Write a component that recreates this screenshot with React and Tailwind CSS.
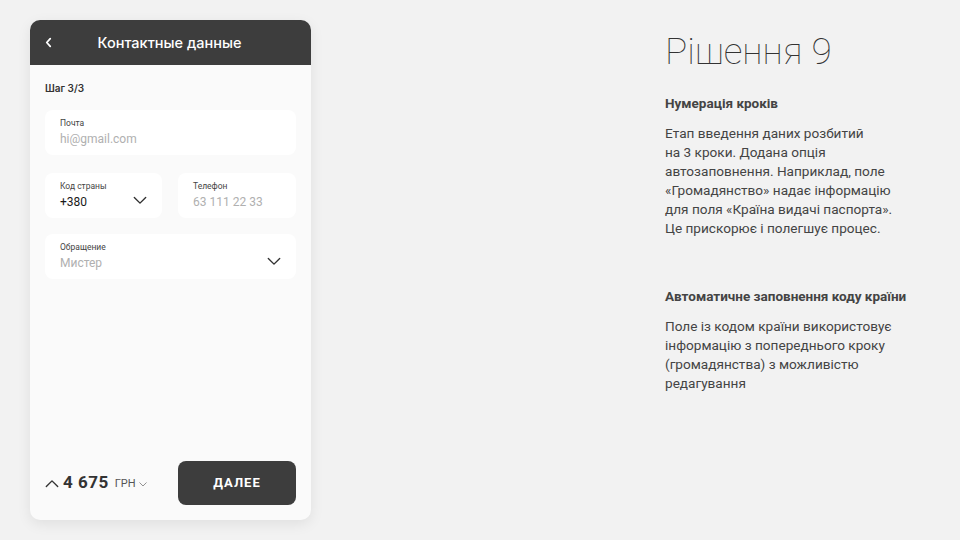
import React from 'react';

function Chevron({ className = '', up = false }) {
  return (
    <svg viewBox="0 0 16 10" className={className} fill="none" stroke="currentColor" strokeWidth="1.6" strokeLinecap="round" strokeLinejoin="round">
      {up ? <path d="M1.5 8.5 L8 2 L14.5 8.5" /> : <path d="M1.5 1.5 L8 8 L14.5 1.5" />}
    </svg>
  );
}

function Field({ label, value, muted = true, arrow = false, className = '' }) {
  return (
    <div className={`bg-white rounded-lg pl-[15px] pr-[15px] h-[45px] flex items-center ${className}`}>
      <div className="flex-1 flex flex-col justify-center">
        <div className="text-[8.5px] leading-[11px] text-[#444]">{label}</div>
        <div className={`text-[12px] leading-[16px] mt-[2px] ${muted ? 'text-[#b0b0b0]' : 'text-[#1a1a1a]'}`}>{value}</div>
      </div>
      {arrow && <Chevron className="w-[14px] h-[9px] text-[#333] mt-[10px]" />}
    </div>
  );
}

export default function App() {
  return (
    <div className="w-[960px] h-[540px] bg-[#f2f2f2] flex overflow-hidden" style={{ fontFamily: 'Roboto, "Noto Sans", sans-serif' }}>
      {/* Phone mockup */}
      <div className="ml-[30px] mt-[20px] w-[281px] h-[500px] bg-[#fafafa] rounded-[10px] shadow-[0_4px_14px_rgba(0,0,0,0.08)] overflow-hidden flex flex-col">
        <div className="h-[45px] bg-[#3d3d3d] flex items-center relative shrink-0">
          <svg viewBox="0 0 8 12" className="absolute left-[15px] w-[7px] h-[11px] text-white" fill="none" stroke="currentColor" strokeWidth="2" strokeLinecap="round" strokeLinejoin="round">
            <path d="M6 1.5 L2 6 L6 10.5" />
          </svg>
          <div className="w-full text-center text-white text-[14.5px] font-medium pr-[2px]" style={{ fontFamily: 'Inter, Roboto, sans-serif' }}>
            Контактные данные
          </div>
        </div>

        <div className="flex-1 flex flex-col px-[15px]">
          <div className="text-[10px] font-semibold text-[#333] mt-[16px]" style={{ fontFamily: 'Inter, Roboto, sans-serif' }}>Шаг 3/3</div>

          <Field className="mt-[14px]" label="Почта" value="hi@gmail.com" />

          <div className="flex gap-[16px] mt-[18px]">
            <Field className="w-[117px]" label="Код страны" value="+380" muted={false} arrow />
            <Field className="flex-1" label="Телефон" value="63 111 22 33" />
          </div>

          <Field className="mt-[16px]" label="Обращение" value="Мистер" arrow />

          <div className="flex-1" />

          <div className="flex items-center justify-between mb-[15px]">
            <div className="flex items-center text-[#333]">
              <Chevron up className="w-[14px] h-[9px] mr-[4px]" />
              <span className="text-[17px] font-bold tracking-[0.5px]">4 675</span>
              <span className="text-[11px] ml-[6px] mt-[2px] text-[#555]">ГРН</span>
              <Chevron className="w-[8px] h-[5px] ml-[3px] mt-[2px] text-[#777]" />
            </div>
            <button className="w-[118px] h-[44px] bg-[#3d3d3d] rounded-lg text-white text-[13px] font-bold tracking-[1px]">
              ДАЛЕЕ
            </button>
          </div>
        </div>
      </div>

      {/* Description */}
      <div className="ml-[354px] mt-[30px] w-[280px] text-[#444]">
        <div className="text-[37px] leading-[44px] font-thin text-[#333]">Рішення 9</div>

        <div className="text-[13.5px] font-bold mt-[21px] leading-[16px]">Нумерація кроків</div>
        <p className="text-[13.6px] leading-[19px] mt-[13px]">
          Етап введення даних розбитий<br />
          на 3 кроки. Додана опція<br />
          автозаповнення. Наприклад, поле<br />
          «Громадянство» надає інформацію<br />
          для поля «Країна видачі паспорта».<br />
          Це прискорює і полегшує процес.
        </p>

        <div className="text-[13.5px] font-bold mt-[50px] leading-[16px]">Автоматичне заповнення коду країни</div>
        <p className="text-[13.6px] leading-[19px] mt-[13px]">
          Поле із кодом країни використовує<br />
          інформацію з попереднього кроку<br />
          (громадянства) з можливістю<br />
          редагування
        </p>
      </div>
    </div>
  );
}
